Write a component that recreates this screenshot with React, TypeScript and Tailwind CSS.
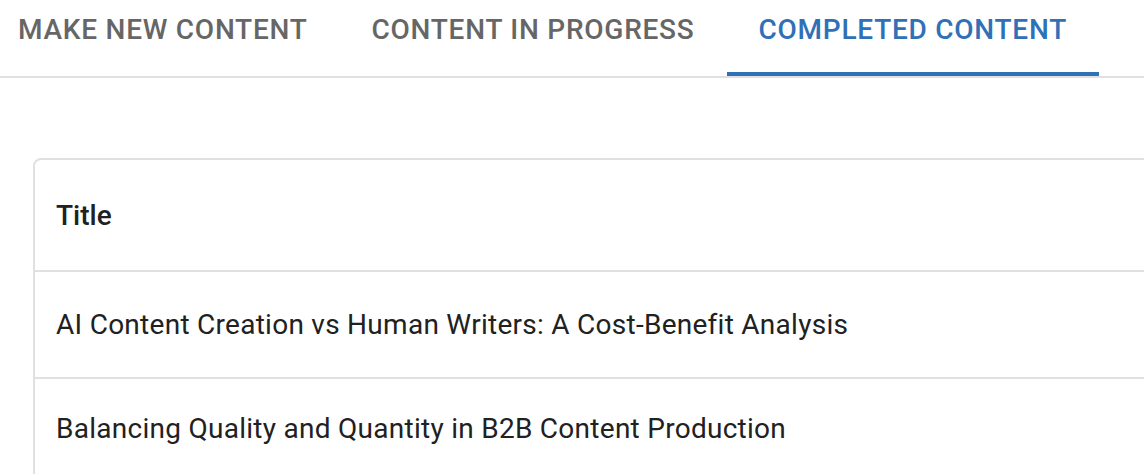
import React from "react";

const tabs = ["MAKE NEW CONTENT", "CONTENT IN PROGRESS", "COMPLETED CONTENT"];

export default function App() {
  return (
    <div
      className="w-[1144px] h-[474px] overflow-hidden bg-white"
      style={{ fontFamily: "Roboto, 'Liberation Sans', sans-serif" }}
    >
      <div className="border-b-2 border-[#e0e0e0]">
        <div className="flex ml-[-14px]">
          {tabs.map((t, i) => {
            const sel = i === 2;
            return (
              <div
                key={t}
                className={`flex flex-col px-[32px] pt-[12px] ${sel ? "text-[#3070b7]" : "text-[#666666]"}`}
              >
                <span className="text-[28px] leading-[35px] font-medium tracking-[0.75px] whitespace-nowrap">
                  {t}
                </span>
                <div className="h-[25px]" />
                <div className={`h-[4px] mx-[-32px] ${sel ? "bg-[#3070b7]" : "bg-transparent"}`} />
              </div>
            );
          })}
        </div>
      </div>
      <div className="pt-[80px] pl-[33px]">
        <div className="w-[1300px] border-2 border-[#e0e0e0] rounded-[8px] text-[#212121]">
          <div className="h-[112px] flex items-center pl-[21px] pt-[2px] border-b-2 border-[#e0e0e0]">
            <span className="text-[28px] font-medium leading-[48px]">Title</span>
          </div>
          <div className="h-[107px] flex items-center pl-[21px] border-b-2 border-[#e0e0e0]">
            <span className="text-[28px] leading-[40px] tracking-[0.27px] whitespace-nowrap">
              AI Content Creation vs Human Writers: A Cost-Benefit Analysis
            </span>
          </div>
          <div className="h-[99px] flex items-center pl-[21px]">
            <span className="text-[28px] leading-[40px] tracking-[0.27px] whitespace-nowrap">
              Balancing Quality and Quantity in B2B Content Production
            </span>
          </div>
        </div>
      </div>
    </div>
  );
}
